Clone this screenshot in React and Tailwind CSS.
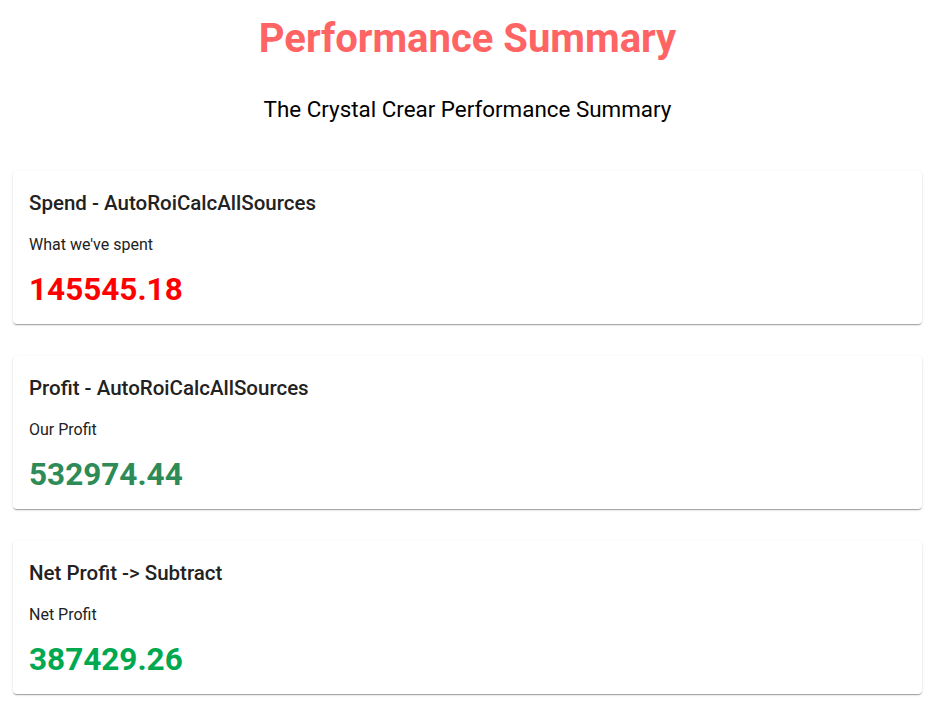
// App.jsx
const cards = [
  {
    title: "Spend - AutoRoiCalcAllSources",
    subtitle: "What we've spent",
    value: "145545.18",
    color: "text-[#ff0000]",
  },
  {
    title: "Profit - AutoRoiCalcAllSources",
    subtitle: "Our Profit",
    value: "532974.44",
    color: "text-[#2e8b57]",
  },
  {
    title: "Net Profit -> Subtract",
    subtitle: "Net Profit",
    value: "387429.26",
    color: "text-[#00a84f]",
  },
];

function SummaryCard({ title, subtitle, value, color }) {
  return (
    <div className="ml-[5px] w-[909px] h-[153px] bg-white rounded-[4px] shadow-[0_2px_1px_-1px_rgba(0,0,0,0.2),0_1px_1px_0_rgba(0,0,0,0.14),0_1px_3px_0_rgba(0,0,0,0.12)] px-4 pt-[19px]">
      <div className="text-[20.5px] font-medium text-[#222] leading-[26px]">{title}</div>
      <div className="mt-[19px] text-[16px] text-[#222] leading-[20px]">{subtitle}</div>
      <div className={`mt-[15px] text-[31.5px] font-bold leading-[40px] ${color}`}>{value}</div>
    </div>
  );
}

export default function App() {
  return (
    <div className="min-h-screen bg-white font-['Roboto',sans-serif] pb-2 pl-[8px]">
      <h1 className="text-center text-[40px] font-bold text-[#ff6464] leading-[48px] pt-[15px]">
        Performance Summary
      </h1>
      <p className="text-center text-[22.4px] text-black leading-[28px] mt-[32px]">
        The Crystal Crear Performance Summary
      </p>
      <div className="mt-[48px] flex flex-col gap-[32px]">
        {cards.map((c) => (
          <SummaryCard key={c.title} {...c} />
        ))}
      </div>
    </div>
  );
}
